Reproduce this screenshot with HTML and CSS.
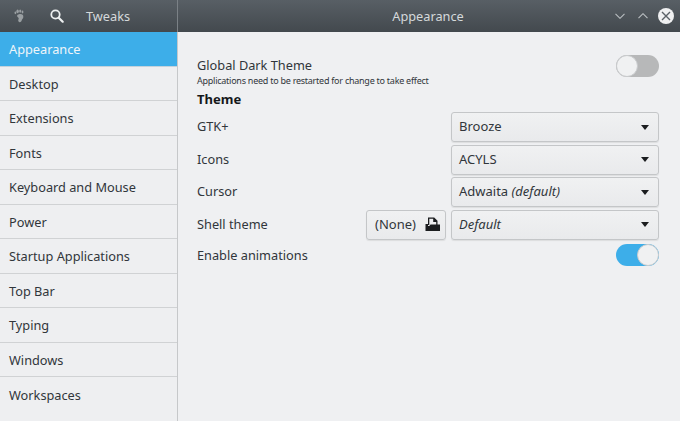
FILE: index.html
```html
<!DOCTYPE html>
<html lang="en">
<head>
    <meta charset="UTF-8">
    <title>Tweaks</title>
    <link rel="stylesheet" href="styles.css">
</head>
<body>
    <div class="window">
        <header class="titlebar">
            <div class="titlebar-left">
                <svg class="foot" width="12" height="14" viewBox="0 0 12 14">
                    <path d="M6 5.200c2.700-.5 4.800.7 4.300 3.100-.3 1.700-1.400 2.100-1.700 3.400-.4 1.500-2.400 2-3.200.6-.7-1.300.7-2 .2-3.200-.4-1-1.600-1.300-1.500-2.300.1-.9.900-1.400 1.900-1.600z" fill="#9a9fa2"/>
                    <ellipse cx="4.600" cy="2.300" rx="1.200" ry="1.900" fill="#9a9fa2"/>
                    <ellipse cx="7.200" cy="2.100" rx="1" ry="1.700" fill="#9a9fa2"/>
                    <ellipse cx="9.500" cy="3" rx=".9" ry="1.400" fill="#9a9fa2"/>
                    <ellipse cx="2.400" cy="3.800" rx=".9" ry="1.400" fill="#9a9fa2"/>
                </svg>
                <svg class="search" width="14" height="14" viewBox="0 0 14 14">
                    <circle cx="5.500" cy="5.500" r="4.200" fill="none" stroke="#eef0f1" stroke-width="1.800"/>
                    <path d="M8.700 8.700l4 4" stroke="#eef0f1" stroke-width="2.200" stroke-linecap="round"/>
                </svg>
                <span class="app-name">Tweaks</span>
            </div>
            <div class="titlebar-main">
                <span class="title">Appearance</span>
                <div class="window-buttons">
                    <svg width="10" height="6" viewBox="0 0 10 6"><path d="M.5 .8l4.500 4.500 4.500-4.500" fill="none" stroke="#b9bec1" stroke-width="1.100"/></svg>
                    <svg width="10" height="6" viewBox="0 0 10 6"><path d="M.5 5.200l4.500-4.500 4.500 4.500" fill="none" stroke="#b9bec1" stroke-width="1.100"/></svg>
                    <span class="close">
                        <svg width="10" height="10" viewBox="0 0 10 10"><path d="M1 1l8 8M9 1l-8 8" stroke="#5a6166" stroke-width="1.400"/></svg>
                    </span>
                </div>
            </div>
        </header>
        <div class="body">
            <nav class="sidebar">
                <div class="nav-item active">Appearance</div>
                <div class="nav-item">Desktop</div>
                <div class="nav-item">Extensions</div>
                <div class="nav-item">Fonts</div>
                <div class="nav-item">Keyboard and Mouse</div>
                <div class="nav-item">Power</div>
                <div class="nav-item">Startup Applications</div>
                <div class="nav-item">Top Bar</div>
                <div class="nav-item">Typing</div>
                <div class="nav-item">Windows</div>
                <div class="nav-item">Workspaces</div>
            </nav>
            <main class="content">
                <div class="dark-row">
                    <div>
                        <div class="label">Global Dark Theme</div>
                        <div class="hint">Applications need to be restarted for change to take effect</div>
                    </div>
                    <span class="switch"><span class="knob"></span></span>
                </div>
                <h4 class="section">Theme</h4>
                <div class="row">
                    <span class="label">GTK+</span>
                    <div class="combo"><span>Brooze</span><i class="arrow"></i></div>
                </div>
                <div class="row">
                    <span class="label">Icons</span>
                    <div class="combo"><span>ACYLS</span><i class="arrow"></i></div>
                </div>
                <div class="row">
                    <span class="label">Cursor</span>
                    <div class="combo"><span>Adwaita <em>(default)</em></span><i class="arrow"></i></div>
                </div>
                <div class="row">
                    <span class="label">Shell theme</span>
                    <div class="shell-controls">
                        <div class="file-btn">
                            <span>(None)</span>
                            <svg width="15" height="14" viewBox="0 0 15 14">
                                <path d="M3 8V.5h6.200l3.300 3.300V8h-1.300V5H8.200V1.800H4.300V8z" fill="#1b1d1f"/>
                                <path d="M.5 7h2.500v2h1.300L5.500 7.500h7.500l2 0V14H.5z" fill="#1b1d1f"/>
                            </svg>
                        </div>
                        <div class="combo"><em>Default</em><i class="arrow"></i></div>
                    </div>
                </div>
                <div class="anim-row">
                    <span class="label">Enable animations</span>
                    <span class="switch on"><span class="knob"></span></span>
                </div>
            </main>
        </div>
    </div>
</body>
</html>
```

FILE: styles.css
```css
html, body {
    margin: 0;
    height: 100%;
    overflow: hidden;
}
body {
    font-family: "Noto Sans", sans-serif;
    font-size: 12.750px;
    color: #31363b;
    background: #eff0f2;
}
.window {
    display: flex;
    flex-direction: column;
    height: 421px;
}
.titlebar {
    display: flex;
    flex: 0 0 32px;
    height: 32px;
    color: #d5d9db;
    background: linear-gradient(#585f65, #43494e);
}
.titlebar-left {
    display: flex;
    align-items: center;
    width: 177px;
    border-right: 1px solid #7b8186;
}
.foot {
    margin-left: 13px;
}
.search {
    margin-left: 25px;
}
.app-name {
    margin-left: 22px;
}
.titlebar-main {
    position: relative;
    flex: 1;
    display: flex;
    align-items: center;
    justify-content: center;
}
.title {
    padding-right: 2px;
}
.window-buttons {
    position: absolute;
    right: 6px;
    top: 8px;
    display: flex;
    align-items: center;
    gap: 13px;
}
.close {
    display: flex;
    align-items: center;
    justify-content: center;
    width: 16px;
    height: 16px;
    margin-left: -3px;
    border-radius: 50%;
    background: #eff0f1;
}
.body {
    flex: 1;
    display: flex;
    min-height: 0;
}
.sidebar {
    width: 177px;
    border-right: 1px solid #c6c8ca;
    background: #eeeff1;
}
.nav-item {
    display: flex;
    align-items: center;
    box-sizing: border-box;
    height: 34.500px;
    padding-left: 9px;
    padding-top: 1px;
    border-bottom: 1px solid #d0d2d4;
}
.nav-item:last-child {
    border-bottom: 0;
}
.nav-item.active {
    color: #eff5f9;
    background: #3daee9;
    border-bottom: 1px solid #c4d2dc;
}
.content {
    flex: 1;
    padding: 23px 21px 0 19px;
}
.dark-row {
    display: flex;
    justify-content: space-between;
    align-items: flex-start;
}
.label {
    line-height: 20px;
}
.row .label {
    margin-top: -2px;
}
.hint {
    font-size: 9px;
    letter-spacing: -0.250px;
    line-height: 14px;
    margin-top: -1px;
}
.section {
    margin: 3px 0 4px;
    font-size: 13px;
    line-height: 17px;
    font-weight: bold;
    color: #15181b;
}
.row {
    display: flex;
    justify-content: space-between;
    align-items: center;
    margin-bottom: 2.600px;
}
.shell-controls {
    display: flex;
    gap: 5px;
}
.combo, .file-btn {
    display: flex;
    align-items: center;
    box-sizing: border-box;
    height: 30px;
    padding-bottom: 2px;
    font-size: 13px;
    border: 1px solid #c4c6c8;
    border-radius: 3px;
    background: linear-gradient(#f0f1f2, #e9eaec);
    box-shadow: 0 1px 1px rgba(0, 0, 0, 0.08);
}
.combo {
    width: 208px;
    justify-content: space-between;
    padding-left: 7px;
    padding-right: 9px;
}
.file-btn {
    width: 80px;
    justify-content: space-between;
    padding-left: 8px;
    padding-right: 5px;
}
.arrow {
    width: 0;
    height: 0;
    margin-top: 2px;
    border-left: 4.500px solid transparent;
    border-right: 4.500px solid transparent;
    border-top: 5px solid #1b1d1f;
}
.switch {
    display: flex;
    box-sizing: border-box;
    width: 43px;
    height: 22px;
    border-radius: 11px;
    background: #b7b8b9;
}
.knob {
    box-sizing: border-box;
    width: 22px;
    height: 22px;
    border: 1px solid #c9cbcd;
    border-radius: 50%;
    background: #f0f1f2;
}
.switch.on {
    justify-content: flex-end;
    background: #3daee9;
}
.anim-row {
    display: flex;
    justify-content: space-between;
    align-items: center;
    margin-top: 4px;
}
```
